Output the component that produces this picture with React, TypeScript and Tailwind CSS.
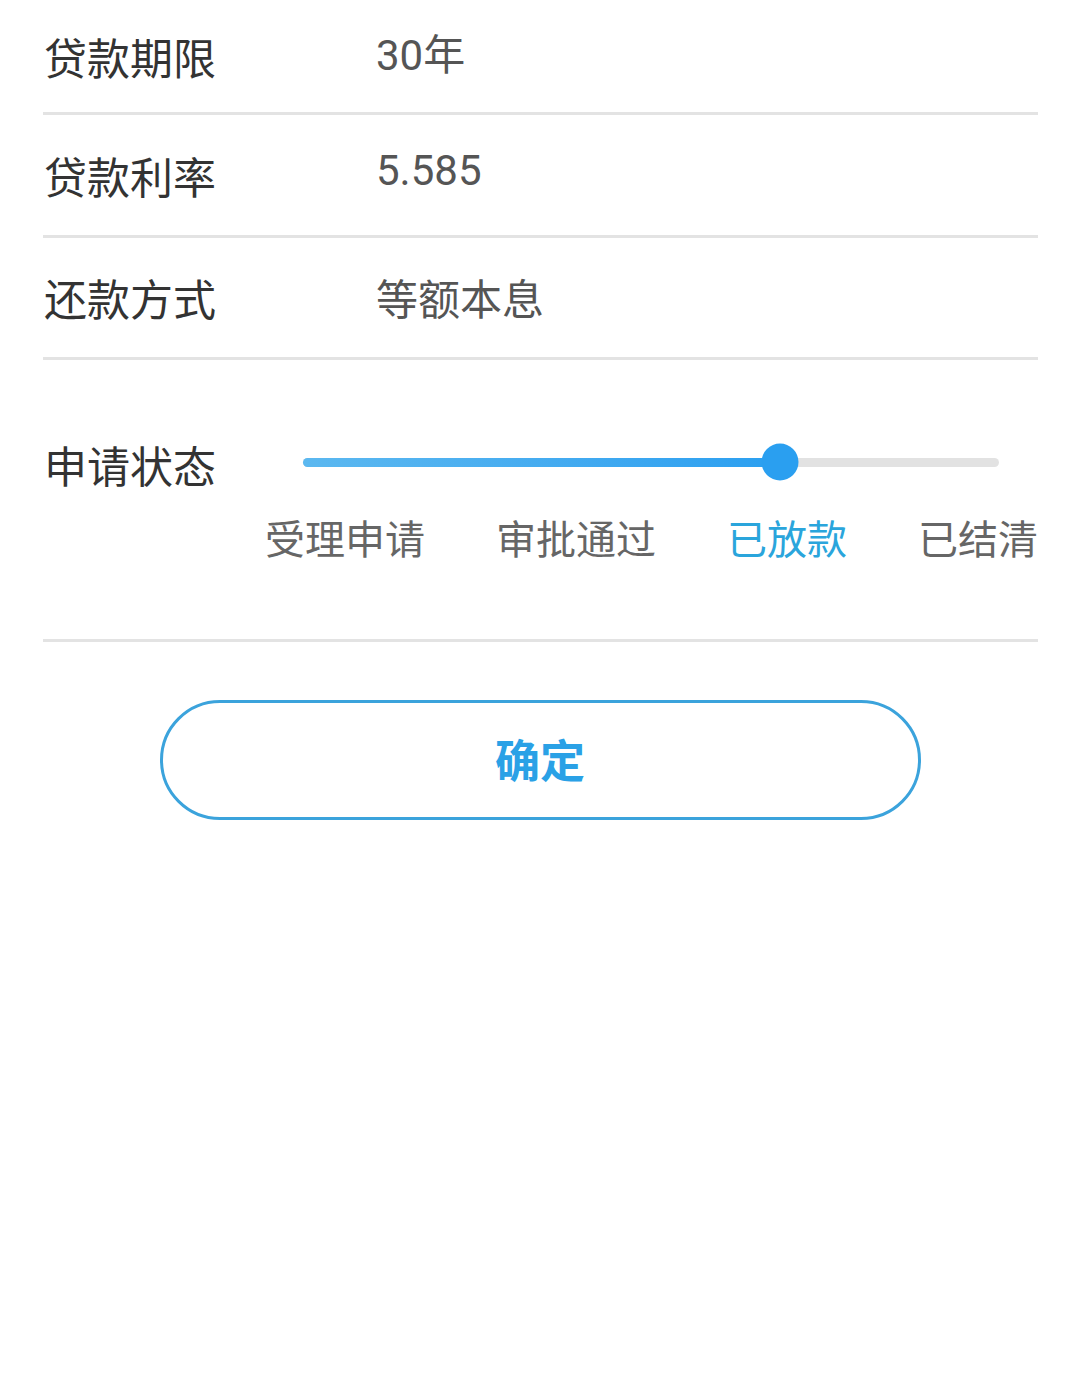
import React from "react";

const font = { fontFamily: '"Noto Sans CJK SC", "Noto Sans", sans-serif' };

function InfoRow({ label, value, h, vshift }: { label: string; value: string; h: string; vshift: string }) {
  return (
    <div className={`flex items-center border-b-[3px] border-[#e3e3e3] ${h}`}>
      <div className="w-[333px] text-[43px] leading-none text-[#333333] pl-[1px]">{label}</div>
      <div className={`text-[42px] leading-none text-[#555555] [font-family:Roboto,'Noto_Sans_CJK_SC',sans-serif] ${vshift}`}>{value}</div>
    </div>
  );
}

export default function App() {
  const steps = ["受理申请", "审批通过", "已放款", "已结清"];
  const active = 2;
  const pct = 68.6;
  return (
    <div className="min-h-[1399px] w-[1080px] bg-white" style={font}>
      <div className="px-[43px] pr-[42px]">
        <InfoRow label="贷款期限" value="30年" h="h-[115px]" vshift="" />
        <InfoRow label="贷款利率" value="5.585" h="h-[123px]" vshift="-mt-[8px]" />
        <InfoRow label="还款方式" value="等额本息" h="h-[122px]" vshift="mt-[6px]" />

        <div className="border-b-[3px] border-[#e3e3e3] pt-[82px] pb-[78px]">
          <div className="flex">
            <div className="w-[222px] pl-[1px] h-[40px] flex items-center pt-[4px] text-[43px] leading-none text-[#333333]">
              申请状态
            </div>
            <div className="flex-1">
              <div className="h-[40px] flex items-center pl-[38px] pr-[39px]">
                <div className="relative h-[9px] w-full rounded-full bg-[#e2e2e2]">
                  <div
                    className="absolute left-0 top-0 h-full rounded-full bg-gradient-to-r from-[#5bb8f0] to-[#2a9ff0]"
                    style={{ width: `${pct}%` }}
                  />
                  <div
                    className="absolute top-1/2 h-[37px] w-[37px] -translate-x-1/2 -translate-y-1/2 rounded-full bg-[#2a9ff0]"
                    style={{ left: `${pct}%` }}
                  />
                </div>
              </div>
              <div className="mt-[31px] flex justify-between">
                {steps.map((s, i) => (
                  <span
                    key={s}
                    className={`text-[40px] leading-[48px] ${i === active ? "text-[#2aa5dc]" : "text-[#666666]"}`}
                  >
                    {s}
                  </span>
                ))}
              </div>
            </div>
          </div>
        </div>
      </div>

      <div className="mt-[58px] flex justify-center">
        <button className="flex h-[120px] w-[761px] items-center justify-center rounded-full border-[3px] border-[#3ba3dc] bg-white">
          <span className="text-[45px] font-bold leading-none text-[#2aa1e6] -mt-[4px]">确定</span>
        </button>
      </div>
    </div>
  );
}
